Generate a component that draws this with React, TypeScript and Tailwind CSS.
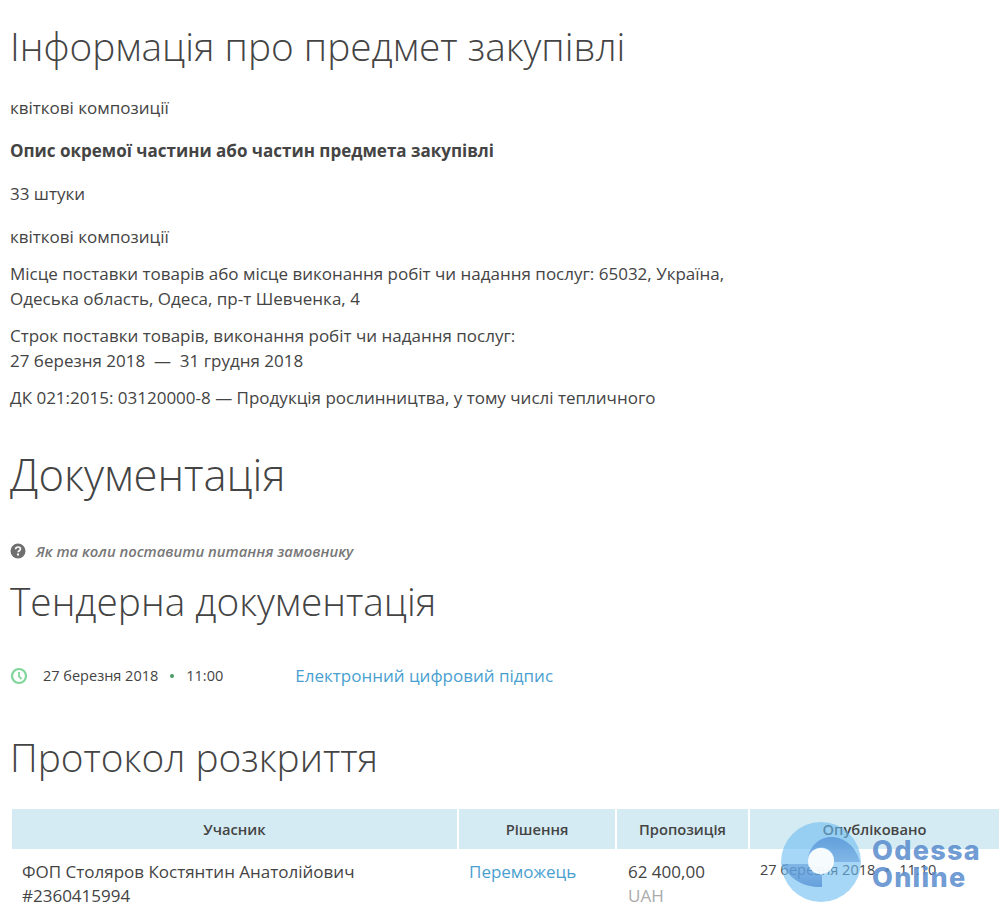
import React from "react";

const font = "font-['Open_Sans',sans-serif]";

const ClockIcon = () => (
  <svg width="18" height="18" viewBox="0 0 18 18" fill="none" stroke="#7fd69a" strokeWidth="2.2">
    <circle cx="9" cy="9" r="7" />
    <path d="M9 5v4.5l2.5 2.5" strokeWidth="1.8" />
  </svg>
);

const HelpIcon = () => (
  <svg width="16" height="16" viewBox="0 0 16 16">
    <circle cx="8" cy="8" r="7.5" fill="#6f6f6f" />
    <path d="M5.6 6.2c0-1.4 1.1-2.2 2.4-2.2s2.4.8 2.4 2c0 1.7-2.2 1.7-2.2 3.2" fill="none" stroke="#fff" strokeWidth="1.7" />
    <rect x="7" y="10.5" width="2" height="2" fill="#fff" />
  </svg>
);

const Watermark = () => (
  <div className="absolute left-[781px] top-[822px] flex items-center">
    <svg width="80" height="80" viewBox="0 0 80 80">
      <defs>
        <linearGradient id="wmTop" x1="0" y1="0" x2="0" y2="1">
          <stop offset="0" stopColor="#5b97d8" stopOpacity="0.85" />
          <stop offset="1" stopColor="#5b97d8" stopOpacity="0.5" />
        </linearGradient>
        <linearGradient id="wmBottom" x1="0" y1="0" x2="0" y2="1">
          <stop offset="0" stopColor="#5b97d8" stopOpacity="0.5" />
          <stop offset="1" stopColor="#5b97d8" stopOpacity="0.85" />
        </linearGradient>
      </defs>
      <circle cx="40" cy="40" r="40" fill="#6cbcf0" fillOpacity="0.6" />
      <path d="M27 37C28 25 38 15 50 15C64 15 75 25 79 40L53 40A13 13 0 0 0 27 37Z" fill="url(#wmTop)" />
      <path d="M1 42L27 42A13 13 0 0 0 41 53L41 65C22 66 8 56 1 42Z" fill="url(#wmBottom)" />
      <circle cx="40" cy="39" r="13" fill="#fff" fillOpacity="0.9" />
    </svg>
    <div className="ml-[11px] mt-[4px] text-[#5d8fce]/90 font-['Inter',sans-serif] font-extrabold text-[27px] leading-[27px] tracking-[1.3px]">
      <div>Odessa</div>
      <div>Online</div>
    </div>
  </div>
);

export default function App() {
  return (
    <div className={`${font} relative h-[922px] w-[1000px] overflow-hidden bg-white text-[#444] text-[17px]`}>
      <div className="px-[10px] pt-[21px]">
        <h1 className="text-[38.8px] leading-[50px] font-light text-[#444]">Інформація про предмет закупівлі</h1>
        <p className="mt-[26px] leading-[22px]">квіткові композиції</p>
        <p className="mt-[21px] leading-[22px] font-bold">Опис окремої частини або частин предмета закупівлі</p>
        <p className="mt-[21px] leading-[22px]">33 штуки</p>
        <p className="mt-[21px] leading-[22px]">квіткові композиції</p>
        <p className="mt-[13px] w-[760px] leading-[25px]">
          Місце поставки товарів або місце виконання робіт чи надання послуг: 65032, Україна,
          <br />
          Одеська область, Одеса, пр-т Шевченка, 4
        </p>
        <p className="mt-[12px] leading-[25px]">
          Строк поставки товарів, виконання робіт чи надання послуг:
          <br />
          27 березня 2018 &nbsp;—&nbsp; 31 грудня 2018
        </p>
        <p className="mt-[12px] leading-[25px]">ДК 021:2015: 03120000-8 — Продукція рослинництва, у тому числі тепличного</p>
        <h1 className="mt-[35px] text-[43.6px] leading-[58px] font-light text-[#444]">Документація</h1>
        <div className="mt-[37px] flex h-[22px] items-center gap-[10px] text-[14.8px] font-semibold italic text-[#777]">
          <HelpIcon />
          <span>Як та коли поставити питання замовнику</span>
        </div>
        <h2 className="mt-[14px] text-[38.8px] leading-[50px] font-light text-[#444]">Тендерна документація</h2>
        <div className="mt-[38px] flex h-[24px] items-center">
          <ClockIcon />
          <span className="ml-[15px] text-[14.5px]">27 березня 2018</span>
          <span className="mx-[12px] h-[4px] w-[4px] rounded-full bg-[#4c9a63]" />
          <span className="text-[14.5px]">11:00</span>
          <a className="ml-[72px] text-[#4a9fd0]">Електронний цифровий підпис</a>
        </div>
        <h2 className="mt-[44px] text-[38.8px] leading-[50px] font-light text-[#444]">Протокол розкриття</h2>
      </div>
      <div className="mt-[27px] ml-[12px] grid w-[987px] grid-cols-[445px_156px_131px_249px] gap-x-[2px] text-[14.7px]">
        <div className="flex h-[40px] items-center justify-center bg-[#d4ebf3] font-semibold">Учасник</div>
        <div className="flex h-[40px] items-center justify-center bg-[#d4ebf3] font-semibold">Рішення</div>
        <div className="flex h-[40px] items-center justify-center bg-[#d4ebf3] font-semibold">Пропозиція</div>
        <div className="flex h-[40px] items-center justify-center bg-[#d4ebf3] font-semibold">Опубліковано</div>
        <div className="px-[10px] pt-[11px] text-[17px] leading-[24px]">
          ФОП Столяров Костянтин Анатолійович
          <br />
          #2360415994
        </div>
        <div className="px-[10px] pt-[11px] text-[17px] leading-[24px] text-[#4a9fd0]">Переможець</div>
        <div className="px-[11px] pt-[11px] text-[17px] leading-[24px]">
          62 400,00
          <div className="text-[#aaa]">UAH</div>
        </div>
        <div className="flex items-center self-start px-[10px] pt-[9px] text-[14.5px] leading-[24px]">
          <span>27 березня 2018</span>
          <span className="mx-[10px] h-[4px] w-[4px] rounded-full bg-[#555]" />
          <span>11:10</span>
        </div>
      </div>
      <Watermark />
    </div>
  );
}
